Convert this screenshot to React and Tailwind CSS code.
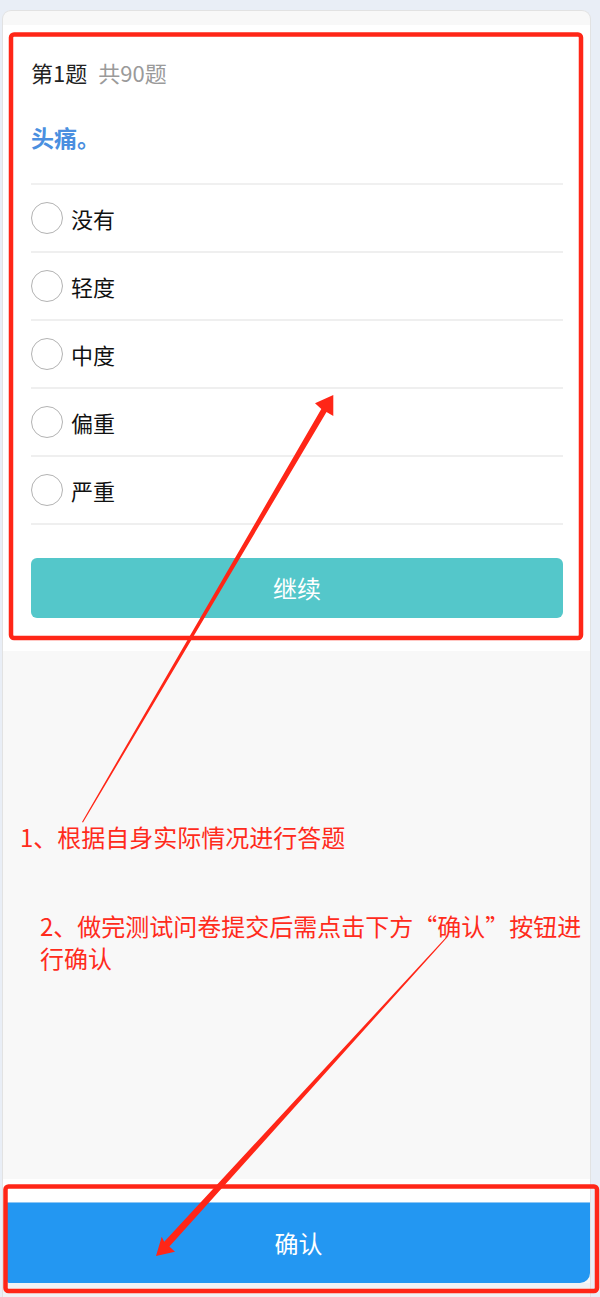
import React from "react";

const FONT = { fontFamily: '"Noto Sans CJK SC", "Noto Sans", sans-serif' };

const options = ["没有", "轻度", "中度", "偏重", "严重"];

export default function App() {
  return (
    <div
      className="relative w-[600px] h-[1297px] overflow-hidden bg-[#e9eef6] pt-[10px] pl-[2px] pr-[9px]"
      style={FONT}
    >
      <div className="flex flex-col h-full border-x border-t border-[#e2e2e2] rounded-t-[9px] bg-[#f8f8f8]">
        <div className="h-[14px] shrink-0" />
        {/* question card */}
        <div className="bg-white pl-[28px] pr-[27px] pt-[33px] pb-[33px] shrink-0">
          <div className="flex items-center text-[22px] leading-[28px]">
            <span className="text-[#222]">第1题</span>
            <span className="ml-[11px] text-[#9a9a9a]">共90题</span>
          </div>
          <div className="mt-[36px] text-[23px] leading-[30px] font-bold text-[#4a8fe0]">
            头痛。
          </div>
          <div className="mt-[31px] border-t-2 border-[#f0f0f0]">
            {options.map((o) => (
              <div
                key={o}
                className="flex items-center h-[68px] border-b-2 border-[#efefef]"
              >
                <div className="w-[32px] h-[32px] rounded-full border border-[#b3b3b3] bg-white" />
                <span className="ml-[8px] text-[22px] text-[#111]">{o}</span>
              </div>
            ))}
          </div>
          <div className="mt-[33px] h-[60px] rounded-[6px] bg-[#54c7ca] flex items-center justify-center text-white text-[24px]">
            继续
          </div>
        </div>
        <div className="flex-1" />
        <div className="h-[23px] bg-white shrink-0" />
        <div className="h-[81px] ml-[4px] shrink-0 bg-[#2397f2] rounded-br-[10px] rounded-bl-[2px] border-t border-[#8cc6f5] flex items-center justify-center text-white text-[24px]">
          确认
        </div>
        <div className="h-[14px] bg-[#f0f2f5] shrink-0" />
      </div>

      {/* annotation texts */}
      <div className="absolute left-[20px] top-[821px] text-[24px] leading-[32px] text-[#ff2b1c] whitespace-nowrap">
        1、根据自身实际情况进行答题
      </div>
      <div className="absolute left-[40px] top-[910px] text-[24px] leading-[32px] text-[#ff2b1c] whitespace-nowrap">
        2、做完测试问卷提交后需点击下方“确认”按钮进
        <br />
        行确认
      </div>

      {/* annotation drawings */}
      <svg
        className="absolute left-0 top-0 pointer-events-none"
        width="600"
        height="1297"
        viewBox="0 0 600 1297"
      >
        <rect x="11" y="34.5" width="570" height="603.5" rx="3" fill="none" stroke="#ff2617" strokeWidth="4.5" />
        <rect x="5.5" y="1186.5" width="591.5" height="104.5" rx="3" fill="none" stroke="#ff2617" strokeWidth="4.5" />
        <polygon
          points="82,822 83,822.6 326.5,412 333.3,416 333.3,395 315,403.3 321.3,409"
          fill="#ff2617"
        />
        <polygon
          points="446.7,938 446,937.3 164.2,1241.8 161.7,1236.7 156,1256 175,1251.7 169.4,1246.6"
          fill="#ff2617"
        />
      </svg>
    </div>
  );
}
